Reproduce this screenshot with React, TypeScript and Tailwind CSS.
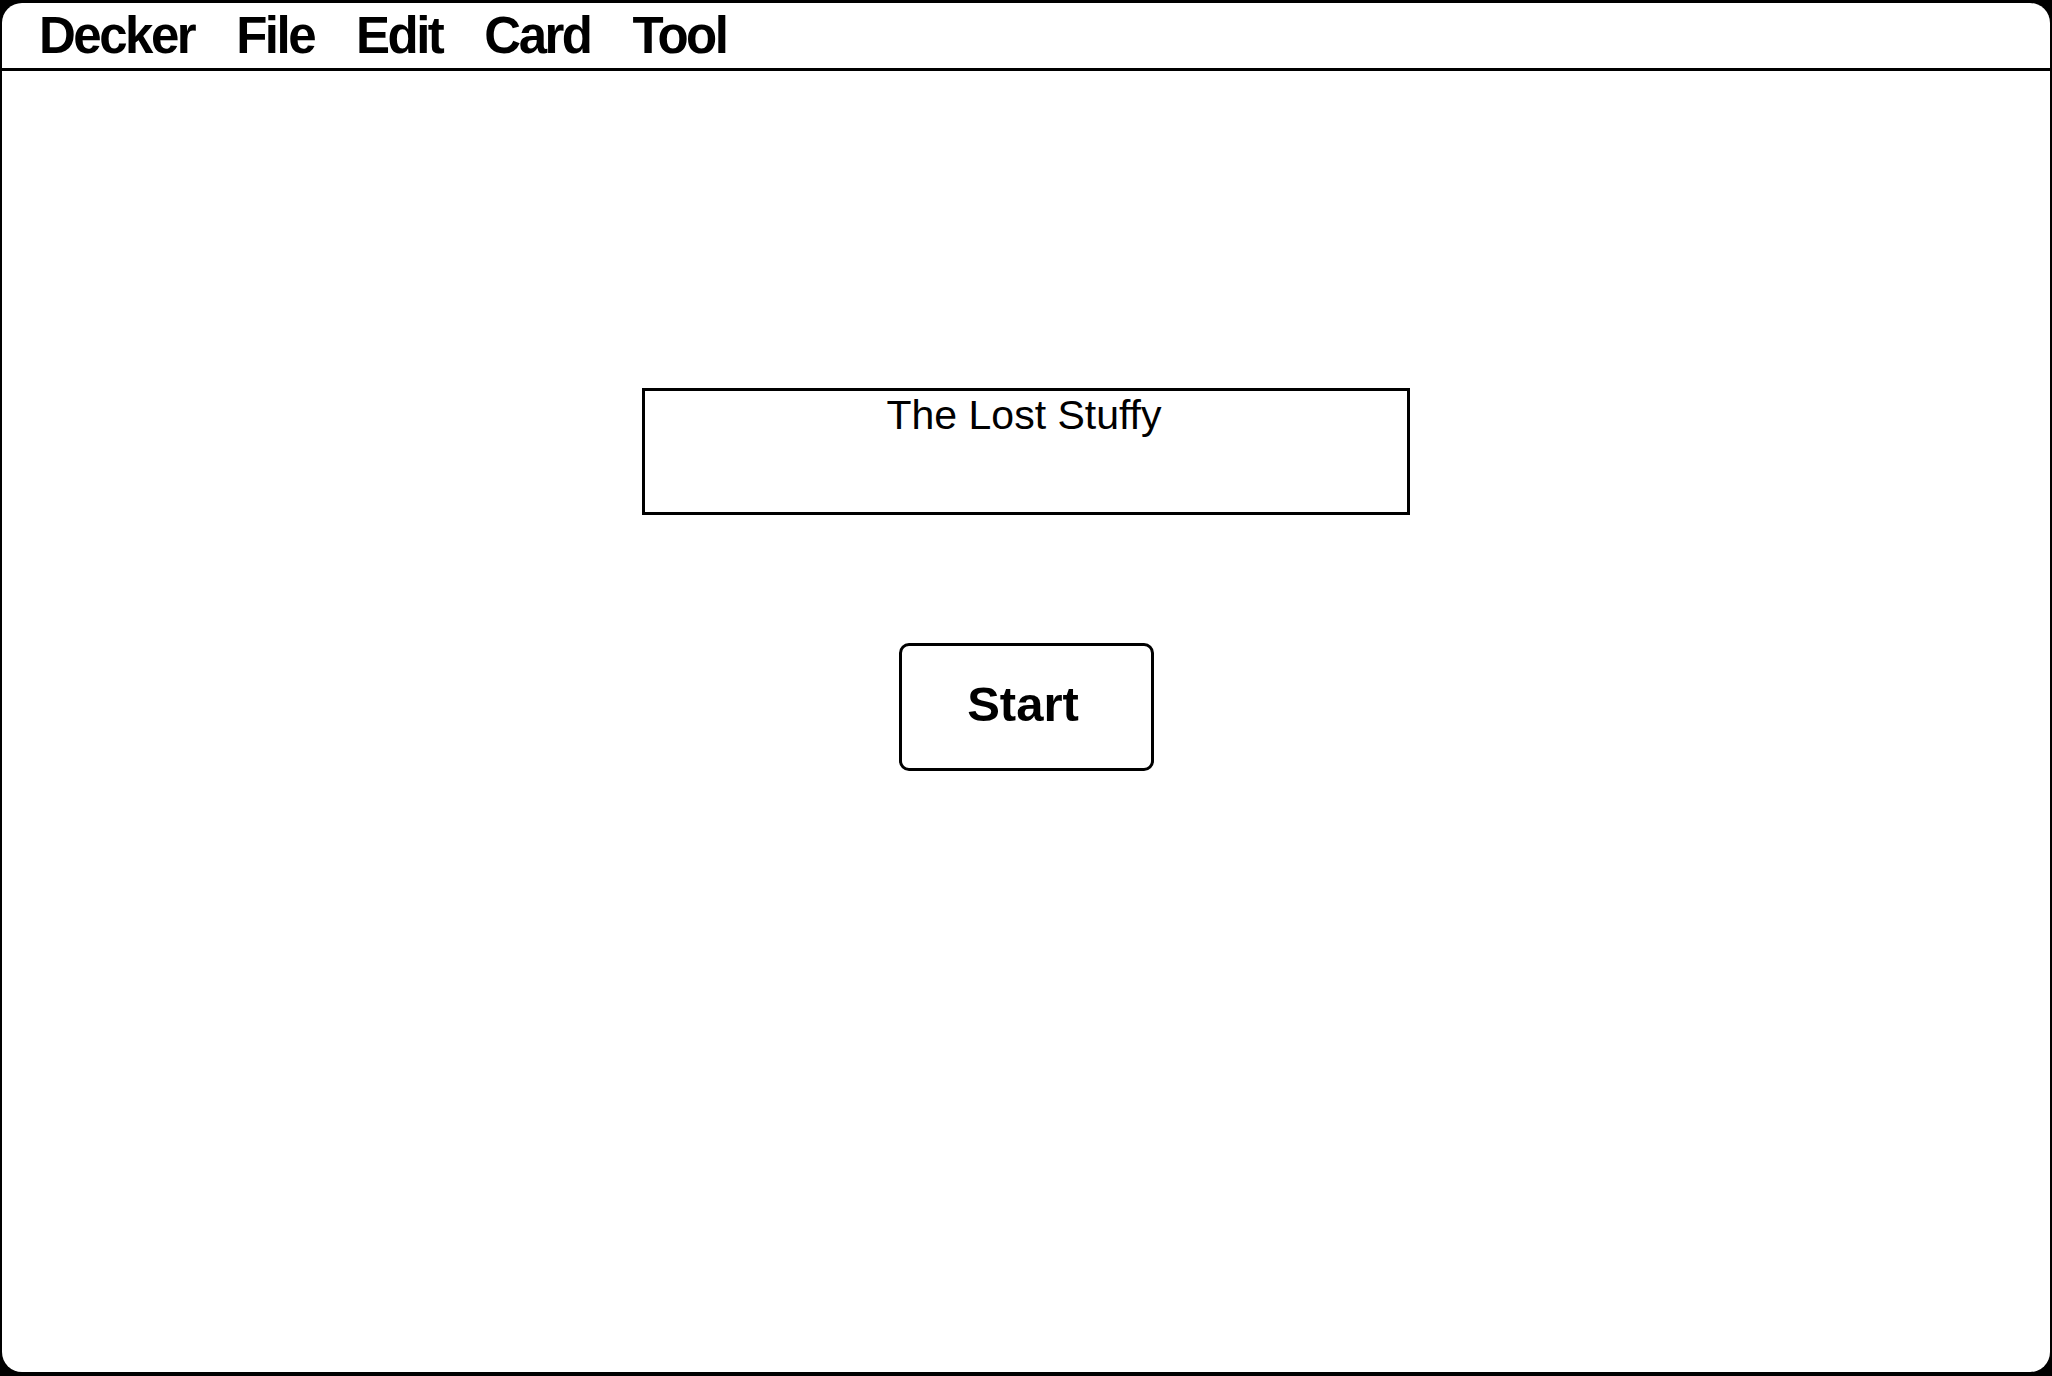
import React from "react";

export default function App() {
  const menu = ["Decker", "File", "Edit", "Card", "Tool"];
  return (
    <div className="h-[1376px] w-full bg-black pt-[3px] px-[2px] pb-[4px]">
      <div className="h-full w-full bg-white rounded-[20px] overflow-hidden flex flex-col">
        <div className="h-[68px] shrink-0 border-b-[3px] border-black flex items-start pt-[7px] pl-[37px] gap-[42px]">
          {menu.map((m) => (
            <span
              key={m}
              className="text-[51px] leading-[52px] font-bold text-black tracking-[-2.5px]"
              style={{ fontFamily: '"Liberation Sans", Arial, sans-serif' }}
            >
              {m}
            </span>
          ))}
        </div>
        <div className="flex flex-col items-center">
          <div className="mt-[317px] w-[768px] h-[127px] border-[3px] border-black flex justify-center pt-[4px]">
            <span
              className="text-[41px] leading-[41px] text-black pr-[4px]"
              style={{ fontFamily: '"Liberation Sans", Arial, sans-serif' }}
            >
              The Lost Stuffy
            </span>
          </div>
          <div className="mt-[128px] w-[255px] h-[128px] border-[3px] border-black rounded-[10px] flex items-center justify-center pb-[6px] pr-[6px]">
            <span
              className="text-[49px] leading-[49px] font-bold text-black"
              style={{ fontFamily: '"Liberation Sans", Arial, sans-serif' }}
            >
              Start
            </span>
          </div>
        </div>
      </div>
    </div>
  );
}
